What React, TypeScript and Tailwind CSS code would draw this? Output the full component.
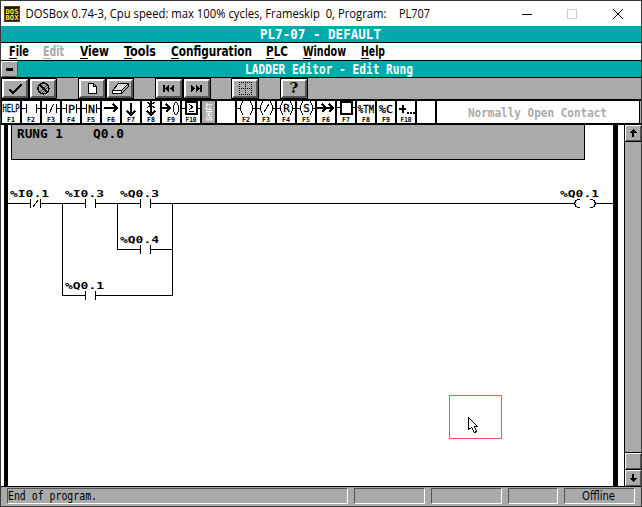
import React from 'react';

const MONO = "font-['DejaVu_Sans_Mono','Liberation_Mono',monospace]";
const COND = "font-['DejaVu_Sans_Condensed','DejaVu_Sans',sans-serif]";

function Px({ w, h, children, className = '' }: { w: number; h: number; children?: React.ReactNode; className?: string }) {
  return (
    <svg width={w} height={h} viewBox={`0 0 ${w} ${h}`} shapeRendering="crispEdges" className={`block shrink-0 ${className}`}>
      {children}
    </svg>
  );
}

function Line({ d, w = 1, c = '#000' }: { d: string; w?: number; c?: string }) {
  return <path d={d} stroke={c} strokeWidth={w} fill="none" />;
}

const menus = [
  { t: 'File', c: 'w-[34px]', s: 20 },
  { t: 'Edit', c: 'w-[37px] text-[#aaa]', s: 21 },
  { t: 'View', c: 'w-[44px]', s: 29 },
  { t: 'Tools', c: 'w-[47px]', s: 32 },
  { t: 'Configuration', c: 'w-[95px]', s: 81 },
  { t: 'PLC', c: 'w-[37px]', s: 22 },
  { t: 'Window', c: 'w-[58px]', s: 43 },
  { t: 'Help', c: 'w-[40px]', s: 24 },
];

function Fit({ children, w, size = 13.5, bold = true, mono = false }: { children: string; w: number; size?: number; bold?: boolean; mono?: boolean }) {
  return (
    <svg width={w + 2} height="16" className={`block shrink-0 overflow-visible ${mono ? MONO : COND}`}>
      <text x="0" y="13" textLength={w} lengthAdjust="spacingAndGlyphs" fontSize={size} fontWeight={bold ? 700 : 400} fill="currentColor">{children}</text>
    </svg>
  );
}

function Tool({ children, className = '' }: { children: React.ReactNode; className?: string }) {
  return (
    <div className={`h-[21px] w-[28px] shrink-0 border border-black bg-[#aaa] ${className}`}>
      <div className="flex h-[19px] w-[26px] items-center justify-center border-2 border-t-white border-l-white border-r-[#555] border-b-[#555]">{children}</div>
    </div>
  );
}

function Key({ f, children }: { f?: string; children?: React.ReactNode }) {
  return (
    <div className="h-[22px] w-[20px] shrink-0 border-r-2 border-black bg-white">
      <svg width="18" height="22" className={`block overflow-visible ${MONO}`}>
        <g shapeRendering="crispEdges">{children}</g>
        {f && <text x="9" y="21" fontSize="7" fontWeight="700" textAnchor="middle" textLength={f.length > 2 ? 11 : 8} lengthAdjust="spacingAndGlyphs">{f}</text>}
      </svg>
    </div>
  );
}

function KText({ t, x = 9.5, w, size = 11, y = 12 }: { t: string; x?: number; w: number; size?: number; y?: number }) {
  return <text x={x - w / 2} y={y} fontSize={size} textLength={w} lengthAdjust="spacingAndGlyphs" stroke="#000" strokeWidth="0.3">{t}</text>;
}

const brackets = 'M0 7.5H5M4.5 3V12M14.5 3V12M14 7.5H18';
const parens = 'M5.5 0V2M4.5 2V4M3.5 4V10M4.5 10V12M5.5 12V14M13.5 0V2M14.5 2V4M15.5 4V10M14.5 10V12M13.5 12V14M0 7.5H3M16 7.5H18';

function Label({ x, y, t }: { x: number; y: number; t: string }) {
  return <text x={x} y={y} fontSize="9.5" fontWeight="700" textLength="39" lengthAdjust="spacingAndGlyphs">{t}</text>;
}

function Well({ className, children }: { className: string; children?: React.ReactNode }) {
  return <div className={`h-[16px] shrink-0 border border-t-[#555] border-l-[#555] border-r-white border-b-white ${className}`}>{children}</div>;
}

export default function App() {
  return (
    <div className="h-[507px] w-[642px] overflow-hidden bg-[#393939] pt-px pl-px">
      <div className="flex h-[505px] w-[640px] flex-col bg-[#aaa] text-black">
        <header className="flex h-[25px] shrink-0 items-center bg-white">
          <svg width="16" height="16" className={`mt-px ml-[3px] block shrink-0 ${MONO}`}>
            <rect width="16" height="16" fill="#653b05" />
            <rect x="1" y="1" width="14" height="14" fill="#251402" />
            <text x="1.5" y="7.5" fontSize="7" fontWeight="700" textLength="13" lengthAdjust="spacingAndGlyphs" fill="#ffeb35">DOS</text>
            <text x="1.5" y="14.2" fontSize="7" fontWeight="700" textLength="13" lengthAdjust="spacingAndGlyphs" fill="#ffeb35">BOX</text>
          </svg>
          <svg width="420" height="20" className="ml-[5px] shrink-0 font-['Open_Sans','Noto_Sans',sans-serif]">
            <text x="0.5" y="14" fontSize="12" textLength="361" lengthAdjust="spacingAndGlyphs">{'DOSBox 0.74-3, Cpu speed: max 100% cycles, Frameskip \u00a00, Program:'}</text>
            <text x="374" y="14" fontSize="12" textLength="31" lengthAdjust="spacingAndGlyphs">PL707</text>
          </svg>
          <Px w={120} h={12} className="ml-[76px]">
            <Line d="M1 6.5H11" />
            <rect x="46.5" y="1.5" width="9" height="9" fill="none" stroke="#ccc" />
            <path d="M92 1L102 11M102 1L92 11" stroke="#000" fill="none" shapeRendering="auto" />
          </Px>
        </header>

        <div className="h-[17px] shrink-0 border-b border-black bg-[#00aaaa] pl-[259px] text-white"><Fit w={121} mono>PL7-07 - DEFAULT</Fit></div>

        <nav className="flex h-[18px] shrink-0 border-b border-black bg-white pl-[8px]">
          {menus.map((m) => (
            <div key={m.t} className={`relative shrink-0 ${m.c}`}>
              <Fit w={m.s}>{m.t}</Fit>
              <span className="absolute top-[15px] left-0 h-px w-[8px] bg-current" />
            </div>
          ))}
        </nav>

        <div className="flex h-[17px] shrink-0 border-b border-black bg-[#00aaaa] text-white">
          <div className="flex w-[17px] items-center justify-center border border-t-white border-l-white border-r-[#555] border-b-[#555] bg-[#aaa]"><span className="h-[3px] w-[7px] bg-black" /></div>
          <div className="pl-[227px]"><Fit w={168} mono>LADDER Editor - Edit Rung</Fit></div>
        </div>

        <div className="flex h-[21px] shrink-0">
          <Tool><Px w={16} h={12}><path d="M2 6H4L6 9L13 1H15V2L7 11H5L2 7Z" /></Px></Tool>
          <Tool><Px w={15} h={13}><circle cx="7.5" cy="6.5" r="5.5" stroke="#000" fill="none" strokeWidth="1.4" /><Line w={2} d="M3.5 2.5L12 10.5" /><Line d="M4 10L11 3M6 11L12 5" c="#333" /></Px></Tool>
          <Tool className="ml-[21px]"><Px w={11} h={13}><path d="M1.5 1.5H6.5L9.5 4.5V11.5H1.5Z" fill="#fff" stroke="#000" /><Line d="M6.5 1V4.5H10" /></Px></Tool>
          <Tool><Px w={20} h={13}><path d="M8.5 1.5H18.5L11.5 8.5H2.5Z" fill="#ddd" stroke="#000" /><path d="M2.5 8.5H11.5V11.5H2.5Z" fill="#fff" stroke="#000" /><path d="M11.5 8.5L18.5 1.5V4.5L11.5 11.5Z" fill="#aaa" stroke="#000" /></Px></Tool>
          <Tool className="ml-[21px]"><Px w={12} h={7}><path d="M0 0H2V7H0ZM6 0V7L2 3.5ZM7 3.5L11 0V7Z" /></Px></Tool>
          <Tool><Px w={12} h={7}><path d="M0 0L4 3.5L0 7ZM5 0L9 3.5L5 7ZM9 0H11V7H9Z" /></Px></Tool>
          <Tool className="ml-[20px]"><Px w={15} h={13}><path d="M1 .5H14M1 6.5H14M1 12.5H14M1.5 0V13M7.5 0V13M13.5 0V13" fill="none" stroke="#000" strokeDasharray="1 1" /></Px></Tool>
          <Tool className="ml-[21px]"><span className="font-['DejaVu_Serif','Liberation_Serif',serif] text-[15px] leading-none font-bold">?</span></Tool>
        </div>

        <div className="flex h-[26px] shrink-0 border-t-2 border-b-2 border-black bg-black pl-px">
          <Key f="F1"><KText t="HELP" x={9} w={17} size={11} y={11} /></Key>
          <Key f="F2"><Line d={brackets} /></Key>
          <Key f="F3"><Line d={brackets} /><Line d="M7.5 12L11.5 3" /></Key>
          <Key f="F4"><Line d={brackets} /><KText t="P" w={7} /></Key>
          <Key f="F5"><Line d={brackets} /><KText t="N" w={7} /></Key>
          <Key f="F6"><Line w={2} d="M2 7H16M11 3L15 7L11 11" /></Key>
          <Key f="F7"><Line w={2} d="M9 2V14M5 10L9 14L13 10" /></Key>
          <Key f="F8"><Line w={2} d="M9 0V14M5 10L9 14L13 10" /><Line d="M5 1L13 7M13 1L5 7" /></Key>
          <Key f="F9"><Line w={2} d="M0 7H8M4 3L8 7L4 11" /><Line d="M12.5 2V4M11.5 4V11M12.5 11V13M13 1.5H15M15.5 2V4M16.5 4V11M15.5 11V13M13 13.5H15" /></Key>
          <Key f="F10"><path d="M4 1H15V13H4Z" fill="none" stroke="#000" strokeWidth="2" /><Line d="M0 7.5H3M15 7.5H18M7 3.5L11 6L7 8.5M7 10.5H12" /></Key>
          <div className="h-[22px] w-[13px] shrink-0 bg-[#aaa]">
            <svg width="13" height="22" className="block overflow-visible font-['Liberation_Sans',sans-serif]"><text transform="translate(9.5 20) rotate(-90)" fontSize="8.5" fontWeight="700" fill="#fff" textLength="18" lengthAdjust="spacingAndGlyphs">SHIFT</text></svg>
          </div>
          <div className="h-[22px] w-[22px] shrink-0 border-r-2 border-l-2 border-black bg-white" />
          <Key f="F2"><Line d={parens} /></Key>
          <Key f="F3"><Line d={parens} /><Line d="M7 11L12 3" /></Key>
          <Key f="F4"><Line d={parens} /><KText t="R" w={6.5} y={11} /></Key>
          <Key f="F5"><Line d={parens} /><KText t="S" w={6.5} y={11} /></Key>
          <Key f="F6"><Line w={2} d="M0 7H16M5 3L9 7L5 11M12 3L16 7L12 11" /></Key>
          <Key f="F7"><path d="M4 1H15V13H4Z" fill="none" stroke="#000" strokeWidth="2" /><Line d="M0 6.5H3M15 6.5H18" /></Key>
          <Key f="F8"><KText t="%TM" x={9} w={16} size={10} /></Key>
          <Key f="F9"><KText t="%C" x={9} w={14} size={11} /></Key>
          <Key f="F10"><Line w={2} d="M2 8H9M6 4V12" /><path d="M10 11h2v2h-2zM13 11h2v2h-2zM16 11h2v2h-2z" /></Key>
          <Key />
          <div className="w-[202px] shrink-0 bg-white pt-[3px] pl-[31px] text-[#aaa]"><Fit w={139} size={11.5} mono>Normally Open Contact</Fit></div>
          <div className="ml-px w-[2px] bg-[#aaa]" />
        </div>

        <main className="flex h-[361px] shrink-0 bg-white">
          <div className="ml-[3px] w-[4px] shrink-0 bg-black" />
          <div className="w-[605px] shrink-0">
            <div className="ml-[3px] h-[35px] w-[574px] border border-t-0 border-black bg-[#aaa] pl-[5px]">
              <div className="flex"><Fit w={46} size={12.5} mono>RUNG 1</Fit><div className="ml-[28px]"><Fit w={31} size={12.5} mono>Q0.0</Fit></div></div>
            </div>
            <svg width="605" height="326" viewBox="8 160 605 326" className={`block ${MONO}`}>
              <g shapeRendering="crispEdges">
                <Line d="M8 203.5H30M30.5 199V208M40.5 199V208M41 203.5H85M33 207L38 200M85.5 199V208M95.5 199V208M96 203.5H140M140.5 199V208M150.5 199V208M151 203.5H574M596 203.5H613" />
                <Line d="M62.5 204V296M62 295.5H85M85.5 291V300M95.5 291V300M96 295.5H173M172.5 204V296M117.5 204V250M117 249.5H140M140.5 245V254M150.5 245V254M151 249.5H172" />
                <Line d="M580 199.5H577M577 200.5H575M575.5 201V203M574.5 202V205M575.5 204V206M577 206.5H575M580 207.5H577M590 199.5H593M593 200.5H595M594.5 201V203M595.5 202V205M594.5 204V206M593 206.5H595M590 207.5H593" />
                <rect x="449.5" y="395.5" width="52" height="43" fill="none" stroke="#ff5555" />
                <path d="M468.5 417.5V429.5L471.5 427.5L474.5 432.5L476.5 431.5L474.5 426.5H477.5Z" fill="#fff" stroke="#000" />
              </g>
              <Label x={10} y={197} t="%I0.1" />
              <Label x={65} y={197} t="%I0.3" />
              <Label x={120} y={197} t="%Q0.3" />
              <Label x={120} y={243} t="%Q0.4" />
              <Label x={65} y={289} t="%Q0.1" />
              <Label x={560} y={197} t="%Q0.1" />
            </svg>
          </div>
          <div className="w-[5px] shrink-0 bg-black" />
          <aside className="ml-[6px] flex w-[17px] shrink-0 flex-col border-l border-black bg-[#aaa]">
            <div className="flex h-[17px] items-center justify-center border-b border-black shadow-[inset_1px_1px_#fff,inset_-1px_-1px_#555]"><Px w={8} h={8}><path d="M4 0L8 4H5V8H3V4H0Z" /></Px></div>
            <div className="flex-1" />
            <div className="h-[17px] border-t border-black shadow-[inset_1px_1px_#fff,inset_-1px_-1px_#555]" />
            <div className="flex h-[17px] items-center justify-center border-t border-black shadow-[inset_1px_1px_#fff,inset_-1px_-1px_#555]"><Px w={8} h={8}><path d="M4 8L0 4H3V0H5V4H8Z" /></Px></div>
          </aside>
        </main>

        <footer className="flex h-[19px] shrink-0 border-t border-black bg-[#aaa] pt-px pl-[6px]">
          <Well className="w-[341px]"><div className="-mt-[2px]"><Fit w={89} size={11.5} bold={false} mono>End of program.</Fit></div></Well>
          <Well className="ml-[6px] w-[71px]" />
          <Well className="ml-[6px] w-[71px]" />
          <Well className="ml-[6px] w-[50px]" />
          <Well className="ml-[6px] w-[71px] pl-[17px]"><div className="-mt-[2px]"><Fit w={33} size={12.5} bold={false}>Offline</Fit></div></Well>
        </footer>
      </div>
    </div>
  );
}
